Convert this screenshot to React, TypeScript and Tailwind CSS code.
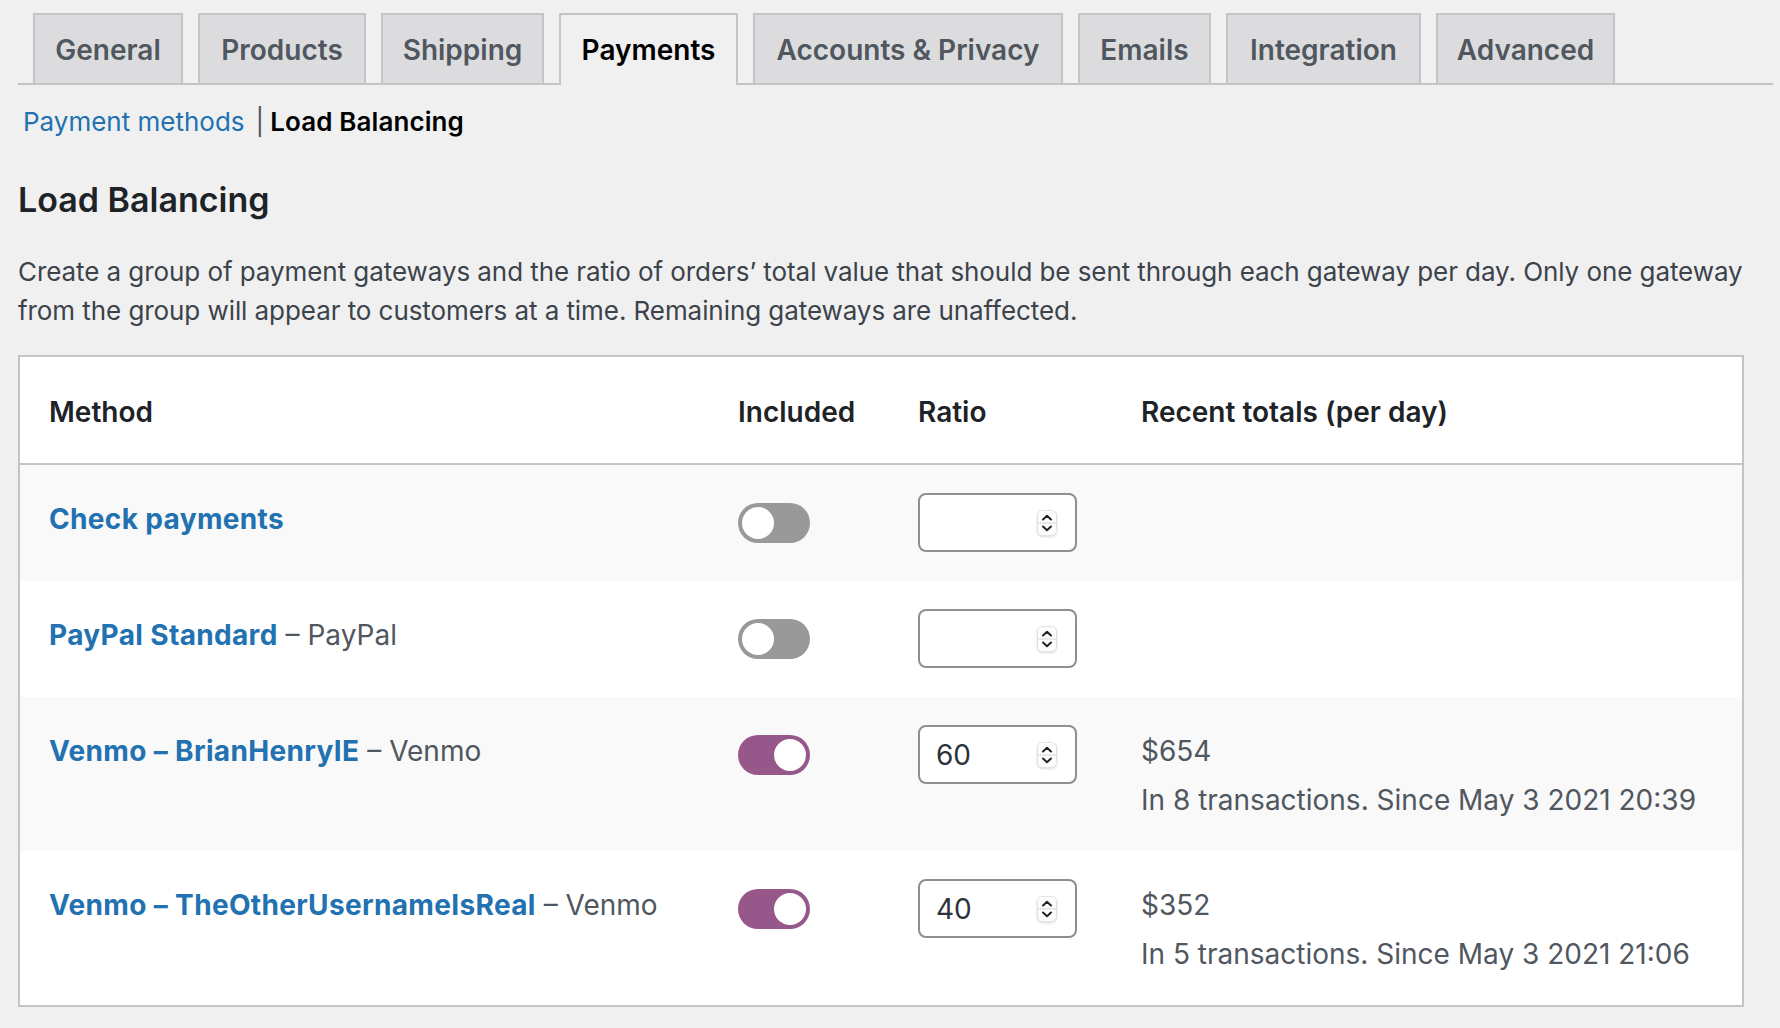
import React from "react";

const tabs = [
  { label: "General", w: "w-[150px]" },
  { label: "Products", w: "w-[168px]" },
  { label: "Shipping", w: "w-[163px]" },
  { label: "Payments", w: "w-[179px]", active: true },
  { label: "Accounts & Privacy", w: "w-[310px]" },
  { label: "Emails", w: "w-[133px]" },
  { label: "Integration", w: "w-[195px]" },
  { label: "Advanced", w: "w-[179px]" },
];

interface Gateway {
  name: string;
  suffix?: string;
  included: boolean;
  ratio: string;
  total?: string;
  detail?: string;
}

const gateways: Gateway[] = [
  { name: "Check payments", included: false, ratio: "" },
  { name: "PayPal Standard", suffix: "PayPal", included: false, ratio: "" },
  {
    name: "Venmo – BrianHenryIE",
    suffix: "Venmo",
    included: true,
    ratio: "60",
    total: "$654",
    detail: "In 8 transactions. Since May 3 2021 20:39",
  },
  {
    name: "Venmo – TheOtherUsernameIsReal",
    suffix: "Venmo",
    included: true,
    ratio: "40",
    total: "$352",
    detail: "In 5 transactions. Since May 3 2021 21:06",
  },
];

const Toggle = ({ on }: { on: boolean }) => (
  <div
    className={
      on
        ? "flex h-[40px] w-[72px] items-center justify-end rounded-full bg-[#96588a] px-[4px]"
        : "flex h-[40px] w-[72px] items-center justify-start rounded-full bg-[#999999] px-[4px]"
    }
  >
    <div className="h-[32px] w-[32px] rounded-full bg-white" />
  </div>
);

const Spinner = () => (
  <svg width="20" height="26" viewBox="0 0 20 26" className="drop-shadow-[0_1px_1px_rgba(0,0,0,0.15)]">
    <rect x="0.5" y="0.5" width="19" height="25" rx="5" fill="#fdfdfd" stroke="#e2e2e2" />
    <line x1="1" y1="13" x2="19" y2="13" stroke="#d6d6d6" strokeWidth="1" />
    <path d="M6 9.5 L10 5.8 L14 9.5" fill="none" stroke="#222" strokeWidth="2" strokeLinecap="round" strokeLinejoin="round" />
    <path d="M6 16.5 L10 20.2 L14 16.5" fill="none" stroke="#222" strokeWidth="2" strokeLinecap="round" strokeLinejoin="round" />
  </svg>
);

const RatioInput = ({ value }: { value: string }) => (
  <div className="flex h-[59px] w-[159px] items-center justify-between rounded-[8px] border-2 border-[#8c8f94] bg-white pl-[16px] pr-[18px]">
    <span className="text-[28px] leading-[42px] text-[#2c3338]">{value}</span>
    <Spinner />
  </div>
);

export default function App() {
  return (
    <div className="min-h-screen bg-[#f0f0f1] pl-[18px] pt-[13px] font-['Inter','Noto_Sans',sans-serif]">
      <nav className="flex w-[1755px] items-end gap-[15px] border-b-2 border-[#c3c4c7] pl-[15px]">
        {tabs.map((t) => (
          <div
            key={t.label}
            className={
              t.active
                ? `${t.w} -mb-[2px] flex h-[72px] items-start justify-center border-2 border-b-0 border-[#c3c4c7] bg-[#f0f0f1] pt-[11px] text-[28px] font-semibold leading-[48px] text-black`
                : `${t.w} flex h-[70px] items-start justify-center border-2 border-b-0 border-[#c3c4c7] bg-[#dcdcde] pt-[11px] text-[28px] font-semibold leading-[48px] text-[#50575e]`
            }
          >
            {t.label}
          </div>
        ))}
      </nav>

      <div className="w-[1726px]">
        <div className="mt-[17px] pl-[5px] text-[26px] leading-[39px]">
          <a className="text-[#2271b1]">Payment methods</a>
          <span className="ml-[11px] mr-[6px] text-[#50575e]">|</span>
          <span className="font-semibold tracking-[0.1px] text-black">Load Balancing</span>
        </div>

        <h2 className="mt-[37px] text-[34px] font-semibold leading-[44px] text-[#1d2327]">Load Balancing</h2>

        <div className="mt-[30px] text-[26px] leading-[39px] tracking-[-0.07px] text-[#3c434a]">
          <p className="whitespace-nowrap">
            Create a group of payment gateways and the ratio of orders’ total value that should be sent through each gateway per day. Only one gateway
          </p>
          <p className="whitespace-nowrap">from the group will appear to customers at a time. Remaining gateways are unaffected.</p>
        </div>

        <div className="mt-[25px] border-2 border-[#c3c4c7] bg-white">
          <div className="grid h-[108px] grid-cols-[689px_180px_223px_1fr] border-b-2 border-[#c3c4c7] pt-[34px] text-[28px] font-semibold leading-[42px] text-[#1d2327]">
            <div className="pl-[29px]">Method</div>
            <div className="pl-[29px]">Included</div>
            <div className="pl-[29px]">Ratio</div>
            <div className="pl-[29px]">Recent totals (per day)</div>
          </div>

          {gateways.map((g, i) => (
            <div
              key={g.name}
              className={`grid grid-cols-[689px_180px_223px_1fr] items-start ${i % 2 === 0 ? "bg-[#f9f9f9]" : "bg-white"}`}
            >
              <div className="pl-[29px] pt-[33px] text-[28px] leading-[42px]">
                <a className="font-bold tracking-[0.35px] text-[#2271b1]">{g.name}</a>
                {g.suffix && <span className="text-[#50575e]"> – {g.suffix}</span>}
              </div>
              <div className="pl-[29px] pt-[38px]">
                <Toggle on={g.included} />
              </div>
              <div className="pb-[29px] pl-[29px] pt-[28px]">
                <RatioInput value={g.ratio} />
              </div>
              <div className="pl-[29px] pt-[33px] text-[28px] leading-[42px] text-[#50575e]">
                {g.total && (
                  <div className="pb-[30px]">
                    <p>{g.total}</p>
                    <p className="mt-[7px]">{g.detail}</p>
                  </div>
                )}
              </div>
            </div>
          ))}
        </div>
      </div>
    </div>
  );
}
